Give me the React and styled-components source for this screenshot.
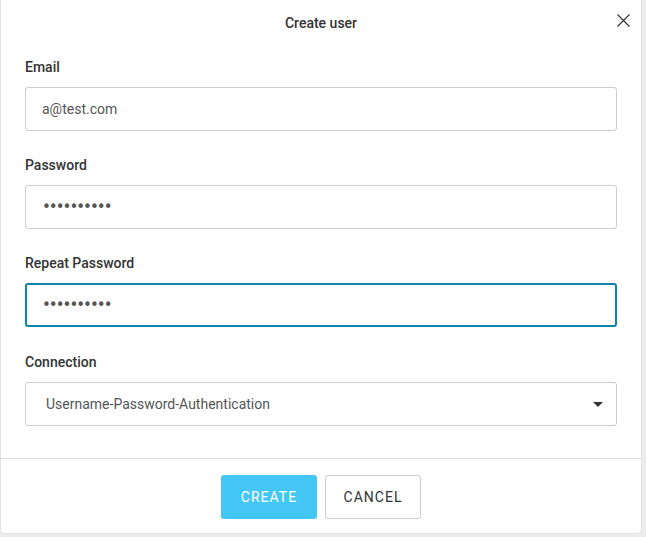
import React from "react";
import styled, { createGlobalStyle } from "styled-components";

const GlobalStyle = createGlobalStyle`
  html, body {
    margin: 0;
    padding: 0;
    background: #ececec;
    font-family: Roboto, "Liberation Sans", sans-serif;
  }
  * { box-sizing: border-box; }
`;

const Page = styled.div`
  width: 646px;
  height: 537px;
  padding-left: 1px;
  overflow: hidden;
`;

const Modal = styled.div`
  width: 640px;
  background: #fff;
  border-radius: 0 0 4px 4px;
  box-shadow: 0 0 0 1px #e2e2e2;
`;

const Header = styled.div`
  position: relative;
  height: 45px;
  display: flex;
  align-items: center;
  justify-content: center;
`;

const Title = styled.h2`
  margin: 0;
  font-size: 14px;
  font-weight: 500;
  color: #333;
`;

const CloseButton = styled.button`
  position: absolute;
  right: 11px;
  top: 13px;
  width: 14px;
  height: 14px;
  padding: 0;
  border: 0;
  background: transparent;
  display: flex;
  align-items: center;
  justify-content: center;
  cursor: pointer;
`;

const Body = styled.div`
  padding: 12px 24px 32px;
  display: flex;
  flex-direction: column;
  gap: 24px;
`;

const Field = styled.div`
  display: flex;
  flex-direction: column;
  gap: 10px;
  margin-top: ${(p) => (p.$extra ? "1px" : "0")};
`;

const Label = styled.label`
  font-size: 14px;
  line-height: 20px;
  font-weight: 500;
  color: #333;
`;

const Input = styled.input`
  height: 44px;
  width: 100%;
  border: ${(p) => (p.$focused ? "2px solid #0d84ae" : "1px solid #ccc")};
  border-radius: 3px;
  padding: 0 ${(p) => (p.$focused ? "15px" : "16px")};
  font-family: ${(p) =>
    p.type === "password" ? '"DejaVu Sans", sans-serif' : "inherit"};
  font-size: ${(p) => (p.type === "password" ? "15px" : "14px")};
  letter-spacing: ${(p) => (p.type === "password" ? "-2px" : "0")};
  color: #555;
  outline: none;
  background: #fff;
`;

const Select = styled.div`
  position: relative;
  height: 44px;
  border: 1px solid #ccc;
  border-radius: 3px;
  padding: 0 20px;
  display: flex;
  align-items: center;
  font-size: 14px;
  color: #555;
`;

const Caret = styled.span`
  position: absolute;
  right: 13px;
  top: 19px;
  width: 0;
  height: 0;
  border-left: 5px solid transparent;
  border-right: 5px solid transparent;
  border-top: 5px solid #333;
`;

const Footer = styled.div`
  border-top: 1px solid #ddd;
  padding: 16px 0 14px;
  display: flex;
  justify-content: center;
  gap: 8px;
`;

const Button = styled.button`
  width: 96px;
  height: 44px;
  border-radius: 3px;
  font-family: inherit;
  font-size: 14px;
  font-weight: 400;
  letter-spacing: 1px;
  text-transform: uppercase;
  cursor: pointer;
  background: ${(p) => (p.$primary ? "#44c7f4" : "#fff")};
  color: ${(p) => (p.$primary ? "#fff" : "#333")};
  border: ${(p) => (p.$primary ? "0" : "1px solid #ccc")};
`;

export default function App() {
  return (
    <Page>
      <GlobalStyle />
      <Modal>
        <Header>
          <Title>Create user</Title>
          <CloseButton aria-label="Close">
            <svg width="13" height="13" viewBox="0 0 13 13">
              <path d="M0.5 0.5L12.5 12.5M12.5 0.5L0.5 12.5" stroke="#333" strokeWidth="1.2" />
            </svg>
          </CloseButton>
        </Header>
        <Body>
          <Field>
            <Label>Email</Label>
            <Input defaultValue="a@test.com" />
          </Field>
          <Field>
            <Label>Password</Label>
            <Input type="password" defaultValue="1234567890" />
          </Field>
          <Field>
            <Label>Repeat Password</Label>
            <Input type="password" defaultValue="1234567890" $focused />
          </Field>
          <Field $extra>
            <Label>Connection</Label>
            <Select>
              Username-Password-Authentication
              <Caret />
            </Select>
          </Field>
        </Body>
        <Footer>
          <Button $primary>Create</Button>
          <Button>Cancel</Button>
        </Footer>
      </Modal>
    </Page>
  );
}
